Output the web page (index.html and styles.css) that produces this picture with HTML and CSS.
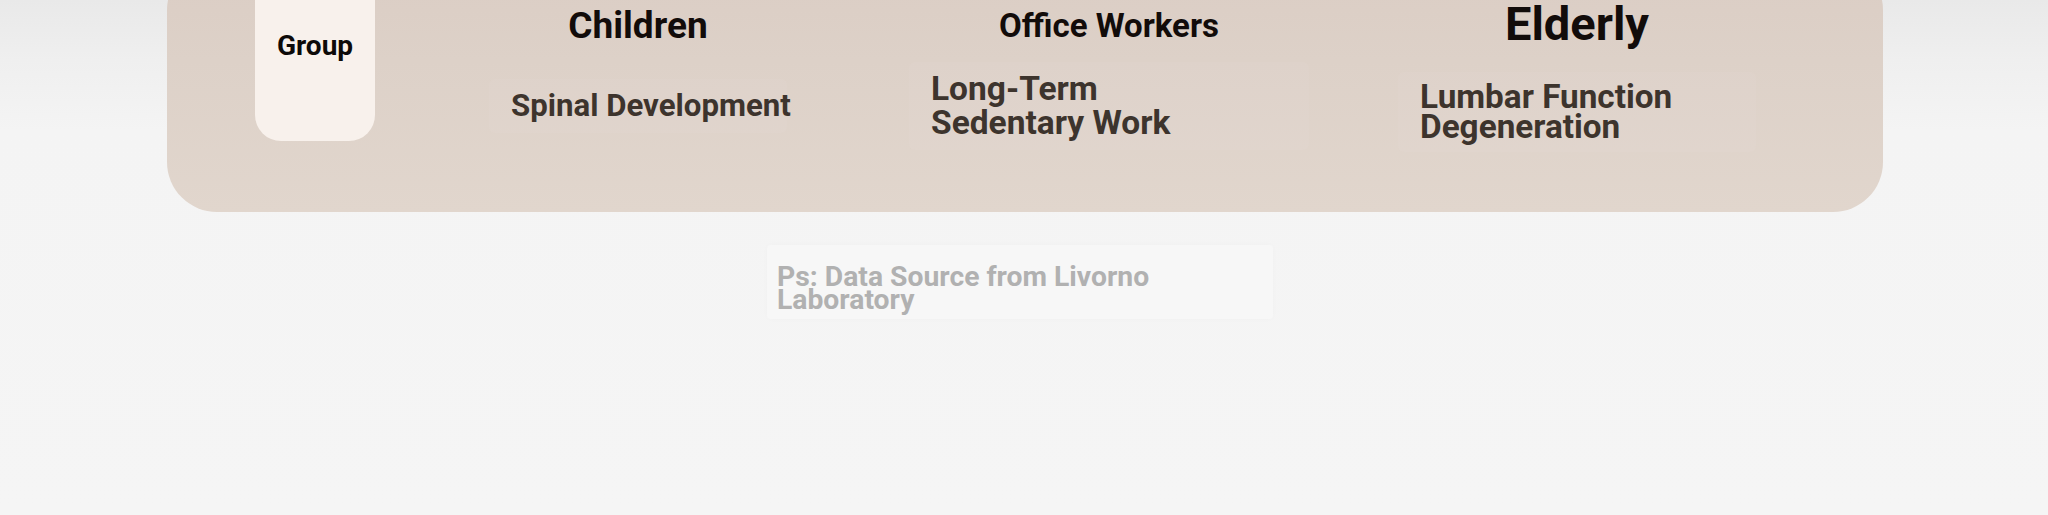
FILE: index.html
```html
<!DOCTYPE html>
<html lang="en">
<head>
<meta charset="utf-8">
<title>Groups</title>
<link rel="stylesheet" href="styles.css">
</head>
<body>
  <main class="page">
    <section class="card">
      <div class="group-pill"><span>Group</span></div>
      <div class="col">
        <h2 class="head head-children">Children</h2>
        <div class="desc-area">
          <p class="desc desc-1">Spinal Development</p>
        </div>
      </div>
      <div class="col">
        <h2 class="head head-office">Office Workers</h2>
        <div class="desc-area">
          <p class="desc desc-2">Long-Term<br>Sedentary Work</p>
        </div>
      </div>
      <div class="col">
        <h2 class="head head-elderly">Elderly</h2>
        <div class="desc-area">
          <p class="desc desc-3">Lumbar Function<br>Degeneration</p>
        </div>
      </div>
    </section>
    <aside class="note">
      <p class="note-text">Ps: Data Source from Livorno Laboratory</p>
    </aside>
  </main>
</body>
</html>
```

FILE: styles.css
```css
html, body {
  margin: 0;
  padding: 0;
}
body {
  width: 2048px;
  height: 515px;
  overflow: hidden;
  font-family: Roboto, "Liberation Sans", sans-serif;
  background: linear-gradient(180deg, #e9e9e9 0px, #efefef 60px, #f4f4f4 130px, #f5f5f5 515px);
}
.page {
  display: flex;
  flex-direction: column;
  align-items: center;
}
.card {
  box-sizing: border-box;
  width: 1716px;
  margin-top: -40px;
  margin-left: 2px;
  height: 252px;
  padding: 0 0 0 88px;
  border-radius: 50px;
  background: linear-gradient(180deg, #dbcdc4 0%, #ddd1c8 40%, #e1d6cd 100%);
  display: grid;
  grid-template-columns: 146px 474px 468px 468px;
  align-items: start;
}
.group-pill {
  box-sizing: border-box;
  height: 181px;
  width: 120px;
  background: #f8f1ec;
  border-radius: 26px;
  padding-top: 71px;
  text-align: center;
  font-weight: 700;
  font-size: 28px;
  line-height: 30px;
  color: #0d0a09;
}
.col {
  padding-top: 40px;
  display: flex;
  flex-direction: column;
  align-items: center;
}
.head {
  margin: 0;
  height: 52px;
  line-height: 52px;
  font-weight: 700;
  color: #120c0a;
  white-space: nowrap;
}
.head-children { font-size: 37px; }
.head-office { font-size: 33px; }
.head-elderly { font-size: 47px; line-height: 48px; }
.desc-area {
  height: 108px;
  display: flex;
  align-items: center;
  justify-content: center;
  width: 100%;
}
.desc {
  box-sizing: border-box;
  margin: 0;
  padding: 10px 22px;
  font-weight: 700;
  color: #3d342d;
  background: rgba(236, 230, 224, 0.1);
  border-radius: 6px;
  white-space: nowrap;
}
.desc-1 { width: 298px; font-size: 31.2px; line-height: 34px; }
.desc-2 { width: 400px; font-size: 33.5px; line-height: 34px; }
.desc-3 { width: 358px; font-size: 33.3px; line-height: 30px; margin-top: 12px; }
.note {
  box-sizing: border-box;
  width: 506px;
  margin-top: 33px;
  margin-left: -8px;
  padding: 20px 10px 8px 10px;
  background: #f7f7f7;
  box-shadow: 0 0 6px rgba(0, 0, 0, 0.02);
  border-radius: 4px;
}
.note-text {
  margin: 0;
  width: 400px;
  font-weight: 700;
  font-size: 28.3px;
  line-height: 23px;
  color: #b1b1b1;
}
```
